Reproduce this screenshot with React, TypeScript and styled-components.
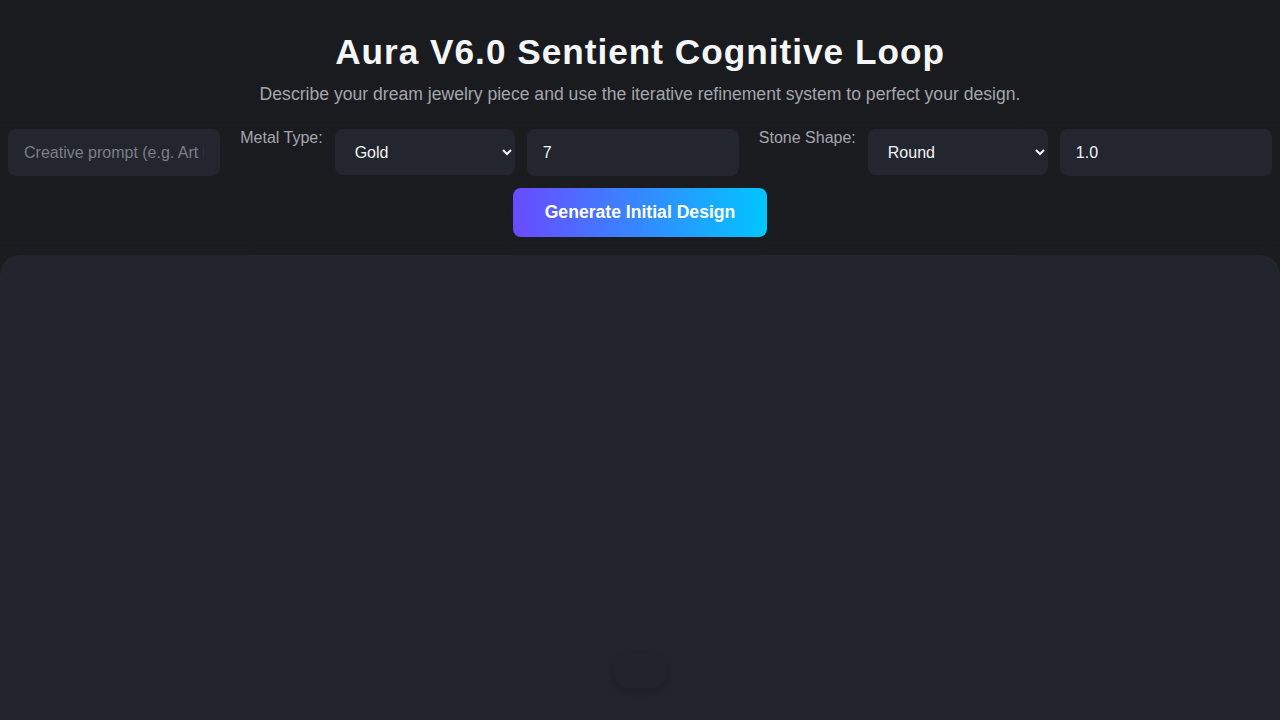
import styled, { createGlobalStyle } from 'styled-components';

const GlobalStyle = createGlobalStyle`
  html, body {
    margin: 0;
    padding: 0;
    background: #1b1c21;
    font-family: "Liberation Sans", Arial, sans-serif;
    color: #f2f3f5;
    overflow: hidden;
  }
  * { box-sizing: border-box; }
`;

const Page = styled.div`
  min-height: 720px;
  background: linear-gradient(180deg, #1a1b1f 0%, #1c1d22 100%);
`;

const Header = styled.header`
  padding: 32px 8px 0;
  text-align: center;
`;

const Title = styled.h1`
  margin: 0;
  font-size: 35.2px;
  line-height: 40px;
  font-weight: 700;
  letter-spacing: 1px;
  color: #f5f6f8;
`;

const Subtitle = styled.p`
  margin: 11px 0 0;
  font-size: 17.6px;
  line-height: 22px;
  color: #a3a5ad;
`;

const Controls = styled.div`
  display: flex;
  align-items: flex-start;
  gap: 12px;
  margin-top: 24px;
  padding: 0 8px;
`;

const TextField = styled.input`
  flex: 1;
  min-width: 0;
  height: 47px;
  padding: 0 16px;
  border: none;
  border-radius: 8px;
  background: #23262f;
  color: #f2f3f5;
  font-family: inherit;
  font-size: 16px;
  outline: none;

  &::placeholder { color: #7b7e87; }
`;

const Label = styled.label`
  padding: 0 0 0 8px;
  font-size: 16px;
  line-height: 18px;
  color: #a3a5ad;
  white-space: nowrap;
`;

const Select = styled.select`
  width: 180px;
  height: 46px;
  padding: 0 12px 0 16px;
  border: none;
  border-radius: 8px;
  background: #23262f;
  color: #f2f3f5;
  font-family: inherit;
  font-size: 16px;
  outline: none;
`;

const Actions = styled.div`
  display: flex;
  justify-content: center;
  margin-top: 12px;
`;

const GenerateButton = styled.button`
  width: 254px;
  height: 49px;
  border: none;
  border-radius: 8px;
  background: linear-gradient(90deg, #6a4bff 0%, #00c6ff 100%);
  color: #ffffff;
  font-family: inherit;
  font-size: 17.6px;
  font-weight: 700;
  cursor: pointer;
`;

const Stage = styled.main`
  margin-top: 18px;
  height: 500px;
  border-radius: 20px 20px 0 0;
  background: #22252e;
  display: flex;
  align-items: flex-end;
  justify-content: center;
  padding-bottom: 67px;
`;

const Dock = styled.div`
  width: 50px;
  height: 34px;
  border-radius: 12px;
  background: #21242c;
  box-shadow: 0 3px 12px rgba(0, 0, 0, 0.18);
`;

export default function App() {
  return (
    <Page>
      <GlobalStyle />
      <Header>
        <Title>Aura V6.0 Sentient Cognitive Loop</Title>
        <Subtitle>
          Describe your dream jewelry piece and use the iterative refinement system to perfect your design.
        </Subtitle>
      </Header>
      <Controls>
        <TextField placeholder="Creative prompt (e.g. Art Deco engagement ring)" />
        <Label>Metal Type:</Label>
        <Select defaultValue="Gold">
          <option>Gold</option>
          <option>Silver</option>
          <option>Platinum</option>
          <option>Rose Gold</option>
        </Select>
        <TextField defaultValue="7" />
        <Label>Stone Shape:</Label>
        <Select defaultValue="Round">
          <option>Round</option>
          <option>Princess</option>
          <option>Oval</option>
          <option>Emerald</option>
        </Select>
        <TextField defaultValue="1.0" />
      </Controls>
      <Actions>
        <GenerateButton>Generate Initial Design</GenerateButton>
      </Actions>
      <Stage>
        <Dock />
      </Stage>
    </Page>
  );
}
